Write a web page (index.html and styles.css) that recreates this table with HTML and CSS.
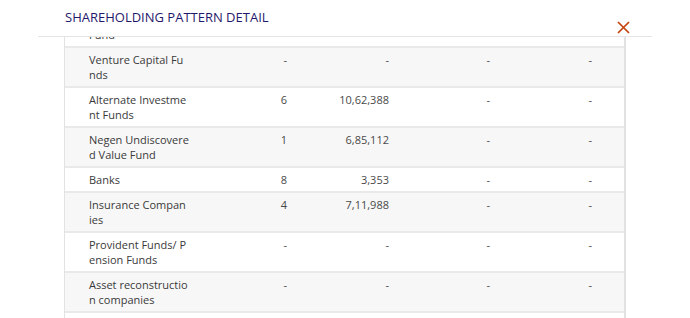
FILE: index.html
```html
<!DOCTYPE html>
<html lang="en">
<head>
<meta charset="utf-8">
<title>Shareholding Pattern Detail</title>
<link rel="stylesheet" href="styles.css">
</head>
<body>
<div class="page">
  <div class="modal">
    <div class="modal-header">
      <h2 class="modal-title">SHAREHOLDING PATTERN DETAIL</h2>
      <button class="close" aria-label="Close">
        <svg width="13" height="13" viewBox="0 0 13 13"><path d="M1 1 L12 12 M12 1 L1 12" stroke="#c4420c" stroke-width="1.7" fill="none"/></svg>
      </button>
    </div>
    <div class="modal-body">
      <div class="table">
        <div class="row">
          <div class="cell name">Mutual Funds/ UTI<br>Fund</div>
          <div class="cell num">-</div><div class="cell num">-</div><div class="cell num">-</div><div class="cell num">-</div>
        </div>
        <div class="row">
          <div class="cell name">Venture Capital Fu<br>nds</div>
          <div class="cell num">-</div><div class="cell num">-</div><div class="cell num">-</div><div class="cell num">-</div>
        </div>
        <div class="row">
          <div class="cell name">Alternate Investme<br>nt Funds</div>
          <div class="cell num">6</div><div class="cell num">10,62,388</div><div class="cell num">-</div><div class="cell num">-</div>
        </div>
        <div class="row">
          <div class="cell name">Negen Undiscovere<br>d Value Fund</div>
          <div class="cell num">1</div><div class="cell num">6,85,112</div><div class="cell num">-</div><div class="cell num">-</div>
        </div>
        <div class="row">
          <div class="cell name">Banks</div>
          <div class="cell num">8</div><div class="cell num">3,353</div><div class="cell num">-</div><div class="cell num">-</div>
        </div>
        <div class="row">
          <div class="cell name">Insurance Compan<br>ies</div>
          <div class="cell num">4</div><div class="cell num">7,11,988</div><div class="cell num">-</div><div class="cell num">-</div>
        </div>
        <div class="row">
          <div class="cell name">Provident Funds/ P<br>ension Funds</div>
          <div class="cell num">-</div><div class="cell num">-</div><div class="cell num">-</div><div class="cell num">-</div>
        </div>
        <div class="row">
          <div class="cell name">Asset reconstructio<br>n companies</div>
          <div class="cell num">-</div><div class="cell num">-</div><div class="cell num">-</div><div class="cell num">-</div>
        </div>
        <div class="row">
          <div class="cell name">Sovereign Wealth F<br>unds</div>
          <div class="cell num">-</div><div class="cell num">-</div><div class="cell num">-</div><div class="cell num">-</div>
        </div>
      </div>
    </div>
  </div>
</div>
</body>
</html>
```
FILE: styles.css
```css
html, body {
  margin: 0;
  padding: 0;
  background: #ffffff;
}
body {
  font-family: "Open Sans", "DejaVu Sans", sans-serif;
  color: #3d3d3d;
}
.page {
  padding: 0 38px;
  height: 318px;
  overflow: hidden;
}
.modal {
  display: flex;
  flex-direction: column;
  height: 100%;
}
.modal-header {
  display: flex;
  justify-content: space-between;
  height: 36px;
  border-bottom: 1px solid #e4e4e4;
  padding: 0 22px 0 27px;
  background: #fff;
}
.modal-title {
  margin: 8px 0 0;
  font-size: 13px;
  line-height: 18px;
  font-weight: 500;
  color: #1f196b;
  letter-spacing: 0;
}
.close {
  margin: 21px 0 0;
  padding: 0;
  border: 0;
  background: none;
  width: 13px;
  height: 13px;
  display: flex;
}
.modal-body {
  flex: 1;
  overflow: hidden;
  padding: 0 26px;
}
.table {
  margin-top: -31px;
  border-left: 1px solid #e2e2e2;
  border-right: 2px solid #e2e2e2;
}
.row {
  display: grid;
  grid-template-columns: 96px 102px 102px 101px 102px;
  padding: 4px 32px 4px 24px;
  border-top: 2px solid #e9e9e9;
  font-size: 11px;
  line-height: 15px;
  background: #ffffff;
}
.row:nth-child(even) {
  background: #f7f7f7;
}
.cell.name {
  white-space: nowrap;
  color: #3a3a3a;
}
.cell.num {
  text-align: right;
  color: #4a4a4a;
}
```
